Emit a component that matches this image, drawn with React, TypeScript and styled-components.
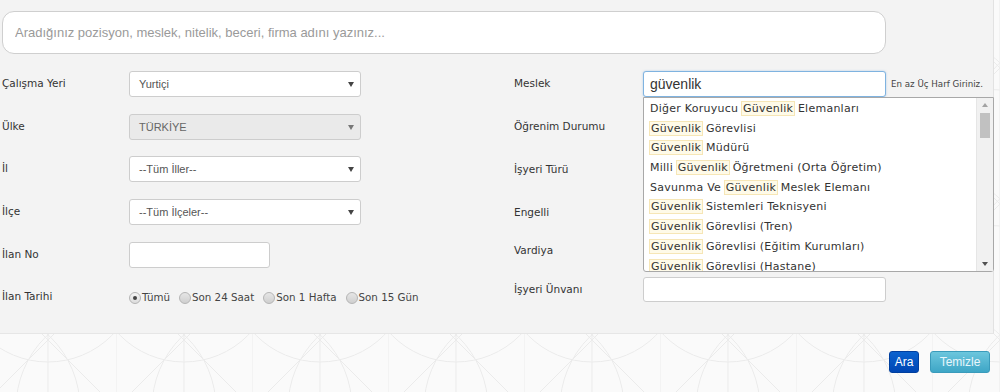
import React from "react";
import styled, { createGlobalStyle, css } from "styled-components";

const patternSvg = encodeURIComponent(
  `<svg xmlns='http://www.w3.org/2000/svg' width='136' height='136'><g fill='none' stroke='#ebebeb' stroke-width='1'><path d='M0 0L136 136M136 0L0 136'/><path d='M68 0V136M0 0V136'/><circle cx='0' cy='136' r='100'/><circle cx='136' cy='136' r='100'/><circle cx='68' cy='0' r='90'/></g></svg>`
);

const GlobalStyle = createGlobalStyle`
  html, body {
    margin: 0;
    padding: 0;
  }
  body {
    width: 1000px;
    height: 392px;
    overflow: hidden;
    background-color: #fafafa;
    background-image: url("data:image/svg+xml,${patternSvg}");
    background-position: -20px 0;
    font-family: "DejaVu Sans", Verdana, sans-serif;
    color: #333;
  }
`;

const Panel = styled.div`
  box-sizing: border-box;
  width: 994px;
  height: 334px;
  padding: 11px 0 0 2px;
  background: #f3f3f3;
  border-right: 1px solid #e2e2e2;
  border-bottom: 1px solid #e6e6e6;
`;

const SearchBox = styled.input`
  box-sizing: border-box;
  display: block;
  width: 884px;
  height: 43px;
  padding: 0 12px;
  border: 1px solid #cfcfcf;
  border-radius: 12px;
  background: #fff;
  font: 13px "Liberation Sans", Arial, sans-serif;
  color: #555;
  outline: none;
  &::placeholder {
    color: #9a9a9a;
  }
`;

const Form = styled.div`
  display: flex;
  margin-top: 17px;
`;

const Column = styled.div<{ $w?: number }>`
  display: flex;
  flex-direction: column;
  ${(p) => p.$w && css`width: ${p.$w}px;`}
`;

const Row = styled.div<{ $h: number }>`
  display: flex;
  align-items: flex-start;
  height: ${(p) => p.$h}px;
  position: relative;
`;

const Label = styled.div<{ $w: number }>`
  width: ${(p) => p.$w}px;
  flex-shrink: 0;
  line-height: 25px;
  font-size: 10.5px;
  color: #333;
  white-space: nowrap;
`;

const SelectBox = styled.div<{ $disabled?: boolean; $w?: number }>`
  box-sizing: border-box;
  position: relative;
  width: ${(p) => p.$w ?? 232}px;
  height: 26px;
  padding-left: 9px;
  border: 1px solid #cdcdcd;
  border-radius: 3px;
  background: ${(p) => (p.$disabled ? "#eaeaea" : "#fff")};
  color: ${(p) => (p.$disabled ? "#666" : "#555")};
  font: 11px/24px "Liberation Sans", Arial, sans-serif;
  &::after {
    content: "";
    position: absolute;
    right: 6px;
    top: 10px;
    border-left: 3px solid transparent;
    border-right: 3px solid transparent;
    border-top: 5px solid ${(p) => (p.$disabled ? "#777" : "#444")};
  }
`;

const TextBox = styled.div<{ $w: number; $focus?: boolean; $h?: number }>`
  box-sizing: border-box;
  width: ${(p) => p.$w}px;
  height: ${(p) => p.$h ?? 26}px;
  padding-left: 6px;
  border: 1px solid ${(p) => (p.$focus ? "#7fb3e0" : "#cdcdcd")};
  border-radius: 3px;
  background: #fff;
  font: 14px/24px "Liberation Sans", Arial, sans-serif;
  color: #333;
  ${(p) =>
    p.$focus &&
    css`
      box-shadow: 0 0 2px rgba(102, 160, 220, 0.5);
    `}
`;

const Hint = styled.span`
  margin-left: 5px;
  line-height: 26px;
  font-size: 8.7px;
  color: #444;
  white-space: nowrap;
`;

const RadioGroup = styled.div`
  display: flex;
  align-items: center;
  height: 25px;
  font-size: 10.3px;
  color: #444;
`;

const RadioItem = styled.label`
  display: flex;
  align-items: center;
  margin-right: 9px;
  white-space: nowrap;
`;

const RadioDot = styled.span<{ $checked?: boolean }>`
  box-sizing: border-box;
  position: relative;
  width: 12px;
  height: 12px;
  margin: 3px 1px 0 0;
  border-radius: 50%;
  border: 1px solid #b5b5b5;
  background: linear-gradient(#e6e6e6, #cfcfcf);
  ${(p) =>
    p.$checked &&
    css`
      background: linear-gradient(#f4f4f4, #dcdcdc);
      &::after {
        content: "";
        position: absolute;
        left: 3px;
        top: 3px;
        width: 4px;
        height: 4px;
        border-radius: 50%;
        background: #444;
      }
    `}
`;

const Suggest = styled.div`
  box-sizing: border-box;
  position: absolute;
  top: 26px;
  left: 129px;
  width: 351px;
  height: 175px;
  display: flex;
  background: #fff;
  border: 1px solid #a8a8a8;
  border-radius: 0 0 3px 3px;
  z-index: 5;
`;

const SuggestList = styled.ul`
  flex: 1;
  margin: 0;
  padding: 0;
  list-style: none;
  overflow: hidden;
`;

const SuggestItem = styled.li`
  height: 19.7px;
  padding-left: 6px;
  font-size: 11px;
  letter-spacing: 0.25px;
  line-height: 19.7px;
  color: #333;
  white-space: nowrap;
  &:first-child {
    margin-top: 1px;
  }
`;

const Mark = styled.span`
  padding: 0 1px;
  background: #fefae8;
  outline: 1px solid #f6e6b6;
`;

const Scrollbar = styled.div`
  width: 16px;
  display: flex;
  flex-direction: column;
  align-items: center;
  background: #f1f1f1;
  border-left: 1px solid #e6e6e6;
`;

const Arrow = styled.span<{ $down?: boolean }>`
  height: 14px;
  display: flex;
  align-items: center;
  &::before {
    content: "";
    border-left: 3.5px solid transparent;
    border-right: 3.5px solid transparent;
    ${(p) =>
      p.$down
        ? css`border-top: 4px solid #505050;`
        : css`border-bottom: 4px solid #a3a3a3;`}
  }
`;

const Thumb = styled.span`
  width: 10px;
  height: 25px;
  margin-top: 1px;
  background: #c1c1c1;
`;

const Track = styled.span`
  flex: 1;
`;

const Footer = styled.div`
  display: flex;
  justify-content: flex-end;
  gap: 11px;
  width: 1000px;
  box-sizing: border-box;
  padding: 17px 10px 0 0;
`;

const Button = styled.button<{ $variant: "primary" | "info" }>`
  height: 22px;
  padding: 0;
  border-radius: 3px;
  font: 12px/20px "Liberation Sans Narrow", "Liberation Sans", Arial, sans-serif;
  color: #fff;
  cursor: pointer;
  ${(p) =>
    p.$variant === "primary"
      ? css`
          width: 30px;
          background: linear-gradient(#0a62cf, #0046b4);
          border: 1px solid #003f9f;
        `
      : css`
          width: 60px;
          background: linear-gradient(#6cc6dd, #3ea6c6);
          border: 1px solid #3a9bbb;
          color: #e8f6fb;
        `}
`;

const Highlighted = ({ before, after }: { before?: string; after?: string }) => (
  <>
    {before && `${before} `}
    <Mark>Güvenlik</Mark>
    {after && ` ${after}`}
  </>
);

const suggestions: { before?: string; after?: string }[] = [
  { before: "Diğer Koruyucu", after: "Elemanları" },
  { after: "Görevlisi" },
  { after: "Müdürü" },
  { before: "Milli", after: "Öğretmeni (Orta Öğretim)" },
  { before: "Savunma Ve", after: "Meslek Elemanı" },
  { after: "Sistemleri Teknisyeni" },
  { after: "Görevlisi (Tren)" },
  { after: "Görevlisi (Eğitim Kurumları)" },
  { after: "Görevlisi (Hastane)" },
];

const radios = ["Tümü", "Son 24 Saat", "Son 1 Hafta", "Son 15 Gün"];

export default function App() {
  return (
    <>
      <GlobalStyle />
      <Panel>
        <SearchBox placeholder="Aradığınız pozisyon, meslek, nitelik, beceri, firma adını yazınız..." />
        <Form>
          <Column $w={512}>
            <Row $h={42.5}>
              <Label $w={127}>Çalışma Yeri</Label>
              <SelectBox>Yurtiçi</SelectBox>
            </Row>
            <Row $h={42.5}>
              <Label $w={127}>Ülke</Label>
              <SelectBox $disabled>TÜRKİYE</SelectBox>
            </Row>
            <Row $h={42.5}>
              <Label $w={127}>İl</Label>
              <SelectBox>--Tüm İller--</SelectBox>
            </Row>
            <Row $h={43}>
              <Label $w={127}>İlçe</Label>
              <SelectBox>--Tüm İlçeler--</SelectBox>
            </Row>
            <Row $h={42.5}>
              <Label $w={127}>İlan No</Label>
              <TextBox $w={141} />
            </Row>
            <Row $h={30}>
              <Label $w={127}>İlan Tarihi</Label>
              <RadioGroup>
                {radios.map((r, i) => (
                  <RadioItem key={r}>
                    <RadioDot $checked={i === 0} />
                    {r}
                  </RadioItem>
                ))}
              </RadioGroup>
            </Row>
          </Column>
          <Column>
            <Row $h={43}>
              <Label $w={129}>Meslek</Label>
              <TextBox $w={243} $focus>
                güvenlik
              </TextBox>
              <Hint>En az Üç Harf Giriniz.</Hint>
              <Suggest>
                <SuggestList>
                  {suggestions.map((s, i) => (
                    <SuggestItem key={i}>
                      <Highlighted before={s.before} after={s.after} />
                    </SuggestItem>
                  ))}
                </SuggestList>
                <Scrollbar>
                  <Arrow />
                  <Thumb />
                  <Track />
                  <Arrow $down />
                </Scrollbar>
              </Suggest>
            </Row>
            <Row $h={43}>
              <Label $w={129}>Öğrenim Durumu</Label>
            </Row>
            <Row $h={43}>
              <Label $w={129}>İşyeri Türü</Label>
            </Row>
            <Row $h={38}>
              <Label $w={129}>Engelli</Label>
            </Row>
            <Row $h={39}>
              <Label $w={129}>Vardiya</Label>
            </Row>
            <Row $h={30}>
              <Label $w={129}>İşyeri Ünvanı</Label>
              <TextBox $w={243} $h={25} />
            </Row>
          </Column>
        </Form>
      </Panel>
      <Footer>
        <Button $variant="primary">Ara</Button>
        <Button $variant="info">Temizle</Button>
      </Footer>
    </>
  );
}
